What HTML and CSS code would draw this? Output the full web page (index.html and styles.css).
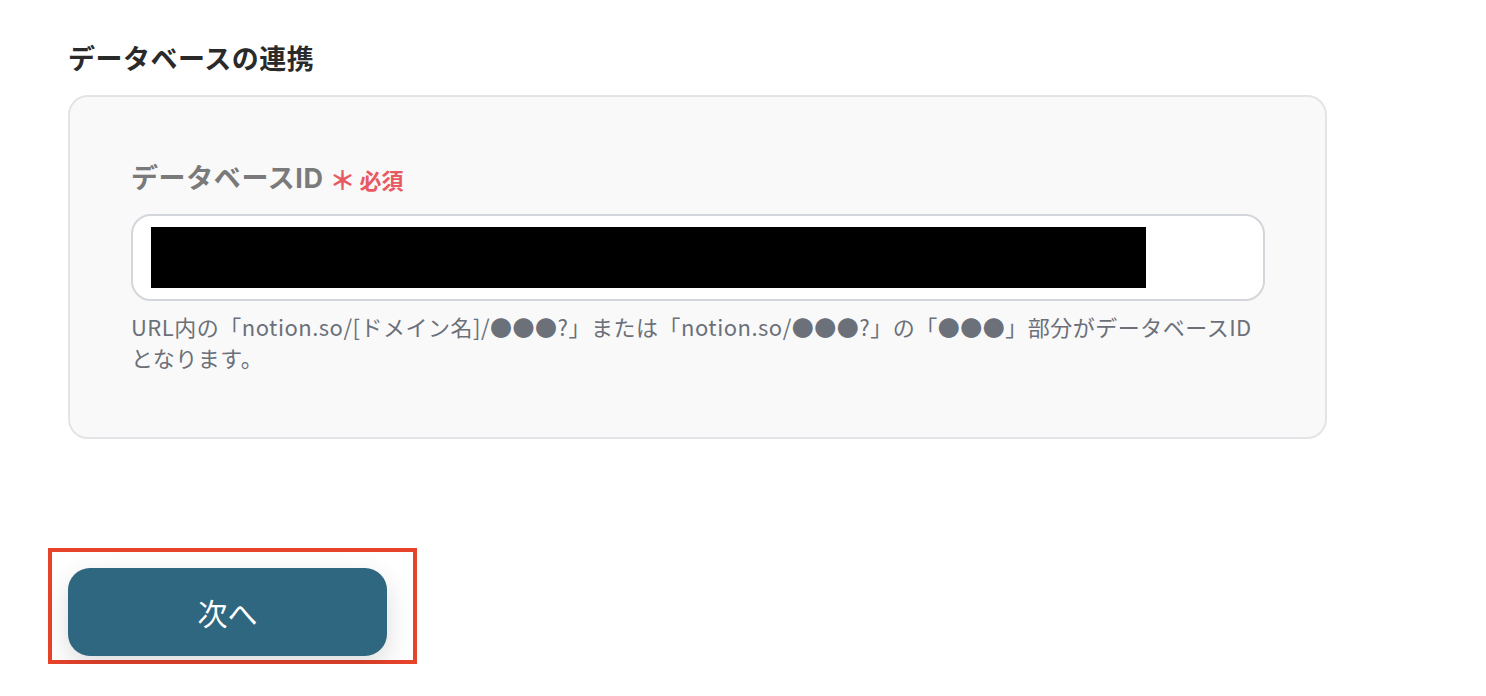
FILE: index.html
```html
<!DOCTYPE html>
<html lang="ja">
    <head>
        <meta charset="utf-8">
        <title>データベースの連携</title>
        <link rel="stylesheet" href="styles.css">
    </head>
    <body>
        <div id="page">
            <h2 class="sectionTitle">データベースの連携</h2>
            <div class="card">
                <div class="fieldLabel">
                    データベースID
                    <span class="required"><span class="star">＊</span>必須</span>
                </div>
                <div class="inputBox">
                    <div class="redacted"></div>
                </div>
                <p class="help">URL内の「notion.so/[ドメイン名]/●●●?」または「notion.so/●●●?」の「●●●」部分がデータベースID<br>となります。</p>
            </div>
            <div class="actions">
                <div class="highlight">
                    <button class="nextButton">次へ</button>
                </div>
            </div>
        </div>
    </body>
</html>
```

FILE: styles.css
```css
body {
    margin: 0;
    background-color: #ffffff;
    font-family: "Noto Sans CJK JP", "Noto Sans", sans-serif;
}

#page {
    padding-top: 40px;
    padding-left: 68px;
    width: 1259px;
}

.sectionTitle {
    margin: 0 0 19px 0;
    font-size: 27px;
    letter-spacing: 0.5px;
    line-height: 36px;
    font-weight: bold;
    color: #2a2a2a;
}

.card {
    border: 2px solid #e2e4e7;
    border-radius: 20px;
    background-color: #f9f9f9;
    padding: 64px 60px 64px 61px;
}

.fieldLabel {
    font-family: "Inter", "Noto Sans CJK JP", sans-serif;
    font-size: 27px;
    letter-spacing: 0.6px;
    line-height: 36px;
    font-weight: bold;
    color: #7a7a7a;
    display: flex;
    align-items: center;
    gap: 6px;
}

.required {
    font-family: "Noto Sans CJK JP", sans-serif;
    color: #e85a62;
    font-size: 22px;
    letter-spacing: 0;
    display: flex;
    align-items: center;
}

.star {
    font-size: 26px;
    margin-right: 4px;
}

.inputBox {
    margin-top: 17px;
    border: 2px solid #d3d6da;
    border-radius: 20px;
    background-color: #ffffff;
    padding: 11px 18px;
    box-sizing: border-box;
    height: 87px;
}

.redacted {
    width: 995px;
    height: 61px;
    background-color: #000000;
}

.help {
    margin: 10px 0 0 0;
    font-size: 22px;
    letter-spacing: 0.5px;
    line-height: 31px;
    color: #6b7079;
    white-space: nowrap;
}

.actions {
    margin-top: 109px;
    margin-left: -20px;
}

.highlight {
    display: inline-block;
    border: 4px solid #e6432b;
    padding: 16px 26px 4px 16px;
}

.nextButton {
    width: 319px;
    height: 88px;
    border: none;
    border-radius: 22px;
    background-color: #2f6680;
    color: #ffffff;
    font-family: "Noto Sans CJK JP", sans-serif;
    font-size: 30px;
    box-shadow: 0 10px 28px rgba(0, 0, 0, 0.14);
    display: block;
}
```
